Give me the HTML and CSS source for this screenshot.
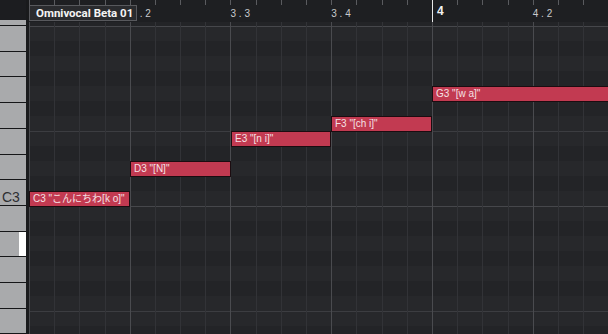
FILE: index.html
```html
<!DOCTYPE html>
<html lang="en">

<head>
  <meta charset="UTF-8" />
  <meta name="viewport" content="width=device-width, initial-scale=1.0" />
  <title>Key Editor</title>
  <link rel="stylesheet" href="styles.css">
</head>

<body>
  <div class="roll">
    <aside class="keyboard">
      <div class="keyboard-cap"></div>
      <div class="key-window">
        <ul class="key-list">
          <li class="key"></li>
          <li class="key"></li>
          <li class="key"></li>
          <li class="key"></li>
          <li class="key"></li>
          <li class="key"></li>
          <li class="key"></li>
          <li class="key"><span class="key-name">C3</span></li>
          <li class="key"></li>
          <li class="key"><span class="key-mark"></span></li>
          <li class="key"></li>
          <li class="key"></li>
          <li class="key"></li>
        </ul>
      </div>
    </aside>

    <div class="divider"></div>

    <main class="editor">
      <header class="ruler">
        <div class="part-name">Omnivocal Beta 01</div>
        <span class="beat"></span>
        <span class="beat beat-clipped">. 2</span>
        <span class="beat">3 . 3</span>
        <span class="beat">3 . 4</span>
        <span class="beat bar">4</span>
        <span class="beat">4 . 2</span>
      </header>

      <section class="grid">
        <div class="note" style="left: 0; top: 169px; width: 101px;">C3 "こんにちわ[k o]"</div>
        <div class="note" style="left: 101px; top: 139px; width: 101px;">D3 "[N]"</div>
        <div class="note" style="left: 202px; top: 109px; width: 100px;">E3 "[n i]"</div>
        <div class="note" style="left: 302px; top: 94px; width: 101px;">F3 "[ch i]"</div>
        <div class="note" style="left: 403px; top: 64px; width: 200px;">G3 "[w a]"</div>
      </section>
    </main>
  </div>
</body>

</html>
```

FILE: styles.css
```css
body {
  margin: 0;
  background-color: #1e1f22;
  font-family: "Liberation Sans", "Noto Sans CJK JP", sans-serif;
  overflow: hidden;
}

.roll {
  display: flex;
  width: 608px;
  height: 334px;
  overflow: hidden;
}

/* keyboard */

.keyboard {
  width: 26px;
  display: flex;
  flex-direction: column;
  flex-shrink: 0;
}

.keyboard-cap {
  height: 20px;
  background: #1c1d20;
}

.key-window {
  flex: 1;
  overflow: hidden;
  background: #a9aaac;
}

.key-list {
  list-style: none;
  margin: -19.714px 0 0;
  padding: 0;
}

.key {
  height: 25.714px;
  box-sizing: border-box;
  border-bottom: 1px solid #151618;
  display: flex;
  align-items: flex-end;
  justify-content: space-between;
}

.key-name {
  padding-left: 2px;
  font-size: 14px;
  line-height: 15px;
  color: #2e2f32;
}

.key-mark {
  width: 7px;
  height: 100%;
  margin-left: auto;
  background: #ffffff;
}

.divider {
  width: 3px;
  flex-shrink: 0;
  background: #191a1c;
}

/* editor */

.editor {
  flex: 1;
  display: flex;
  flex-direction: column;
  min-width: 0;
}

.ruler {
  position: relative;
  height: 22px;
  display: flex;
  flex-shrink: 0;
  background:
    repeating-linear-gradient(90deg, #5a5b5f 0 1px, transparent 1px 25.1875px) top left / 100% 5px no-repeat,
    #1e1f22;
}

.beat {
  width: 100.75px;
  flex-shrink: 0;
  box-sizing: border-box;
  padding-top: 8px;
  font-size: 10px;
  line-height: 11px;
  color: #c9cacc;
}

.beat-clipped {
  padding-left: 10px;
}

.bar {
  padding: 6px 0 0 4px;
  border-left: 1px solid #e8e8e8;
  font-size: 12px;
  font-weight: bold;
  color: #f2f2f2;
}

.part-name {
  position: absolute;
  left: 0;
  top: 5px;
  width: 108px;
  height: 16px;
  box-sizing: border-box;
  padding-left: 6px;
  border: 1px solid #58595d;
  background: #2a2b2e;
  font-family: Roboto, "Liberation Sans", sans-serif;
  font-weight: 700;
  font-size: 11.5px;
  line-height: 14px;
  color: #f4f4f4;
  white-space: nowrap;
}

.grid {
  position: relative;
  flex: 1;
  background:
    repeating-linear-gradient(90deg, #4a4b4f 0 1px, transparent 1px 100.75px),
    repeating-linear-gradient(90deg, #323337 0 1px, transparent 1px 25.1875px),
    repeating-linear-gradient(180deg, #46474b 0 1px, transparent 1px 105px, #3c3d41 105px 106px, transparent 106px 180px) 0 4px,
    repeating-linear-gradient(180deg,
      #27282b 0 15px, #232427 15px 30px,
      #27282b 30px 45px, #232427 45px 60px,
      #27282b 60px 75px, #232427 75px 90px,
      #27282b 90px 120px, #232427 120px 135px,
      #27282b 135px 150px, #232427 150px 165px,
      #27282b 165px 180px) 0 4px;
}

.note {
  position: absolute;
  height: 16px;
  box-sizing: border-box;
  padding-left: 3px;
  border: 1px solid #1c0c10;
  background: #c23a51;
  font-size: 10px;
  line-height: 14px;
  color: #f5e1e5;
  white-space: nowrap;
  overflow: hidden;
}
```
